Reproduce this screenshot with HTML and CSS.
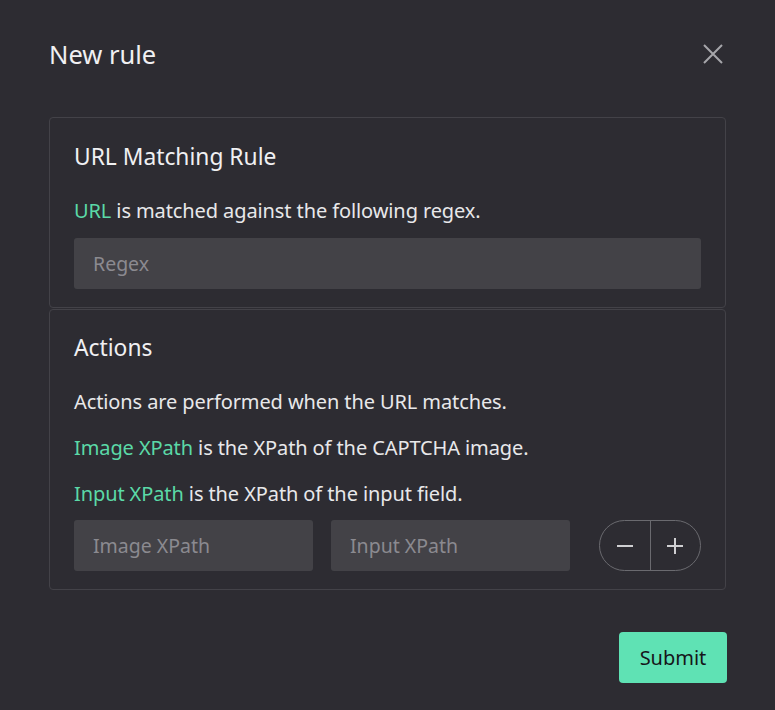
FILE: index.html
```html
<!DOCTYPE html>
<html lang="en">
<head>
<meta charset="utf-8">
<title>New rule</title>
<link rel="stylesheet" href="styles.css">
</head>
<body>
<div class="dialog">
  <div class="header">
    <h1 class="title">New rule</h1>
    <button class="close" aria-label="Close">
      <svg width="20" height="20" viewBox="0 0 20 20"><path d="M1 1L19 19M19 1L1 19" stroke="#a6a6aa" stroke-width="2" fill="none"/></svg>
    </button>
  </div>
  <div class="card">
    <h2 class="card-title">URL Matching Rule</h2>
    <p class="text last"><span class="hl">URL</span> is matched against the following regex.</p>
    <div class="field">Regex</div>
  </div>
  <div class="card card2">
    <h2 class="card-title">Actions</h2>
    <p class="text">Actions are performed when the URL matches.</p>
    <p class="text"><span class="hl">Image XPath</span> is the XPath of the CAPTCHA image.</p>
    <p class="text last"><span class="hl">Input XPath</span> is the XPath of the input field.</p>
    <div class="row">
      <div class="field small">Image XPath</div>
      <div class="field small">Input XPath</div>
      <div class="stepper">
        <button class="step">
          <svg width="20" height="20" viewBox="0 0 20 20"><path d="M2 10H18" stroke="#cfcfd2" stroke-width="2"/></svg>
        </button>
        <button class="step">
          <svg width="20" height="20" viewBox="0 0 20 20"><path d="M2 10H18M10 2V18" stroke="#cfcfd2" stroke-width="2"/></svg>
        </button>
      </div>
    </div>
  </div>
  <div class="footer">
    <button class="submit">Submit</button>
  </div>
</div>
</body>
</html>
```
FILE: styles.css
```css
html, body {
  margin: 0;
  padding: 0;
  background: #2d2c32;
  height: 100%;
}
body {
  font-family: "Noto Sans", "Open Sans", sans-serif;
  color: #e8e8ea;
}
.dialog {
  padding: 36px 49px 0 49px;
}
.header {
  display: flex;
  align-items: center;
  justify-content: space-between;
  height: 36px;
  margin-bottom: 45px;
}
.title {
  margin: 0;
  font-weight: 400;
  font-size: 25.5px;
  line-height: 36px;
  color: #f0f0f2;
}
.close {
  background: none;
  border: 0;
  padding: 0;
  margin-right: 3px;
  width: 20px;
  height: 20px;
  display: flex;
}
.card {
  border: 1px solid #434248;
  border-radius: 4px;
  padding: 24px 24px 18px 24px;
}
.card2 {
  margin-top: 1px;
  padding-top: 23px;
}
.card-title {
  margin: 0 0 25px 0;
  font-weight: 400;
  font-size: 22.8px;
  line-height: 30px;
  color: #f0f0f2;
}
.text {
  margin: 0 0 18px 0;
  font-size: 20px;
  letter-spacing: -0.1px;
  line-height: 28px;
  color: #e8e8ea;
}
.text.last {
  margin-bottom: 13px;
}
.card2 .text.last {
  margin-bottom: 12px;
}
.hl {
  color: #5bd9a7;
}
.field {
  height: 51px;
  background: #434247;
  border-radius: 3px;
  box-sizing: border-box;
  padding: 0 19px;
  display: flex;
  align-items: center;
  font-size: 19.5px;
  color: #8b8a90;
}
.row {
  display: flex;
  align-items: center;
  gap: 18px;
}
.field.small {
  width: 239px;
}
.stepper {
  margin-left: auto;
  display: flex;
  height: 51px;
  width: 102px;
  box-sizing: border-box;
  border: 1px solid #6a6a6f;
  border-radius: 26px;
  overflow: hidden;
}
.step {
  flex: 1;
  background: none;
  border: 0;
  padding: 0;
  display: flex;
  align-items: center;
  justify-content: center;
}
.step + .step {
  border-left: 1px solid #6a6a6f;
}
.footer {
  display: flex;
  justify-content: flex-end;
  margin-top: 42px;
  margin-right: -1px;
}
.submit {
  background: #5fe2b4;
  border: 0;
  border-radius: 4px;
  width: 108px;
  height: 51px;
  font-family: "Noto Sans", "Open Sans", sans-serif;
  font-size: 20px;
  color: #16161a;
}
```
